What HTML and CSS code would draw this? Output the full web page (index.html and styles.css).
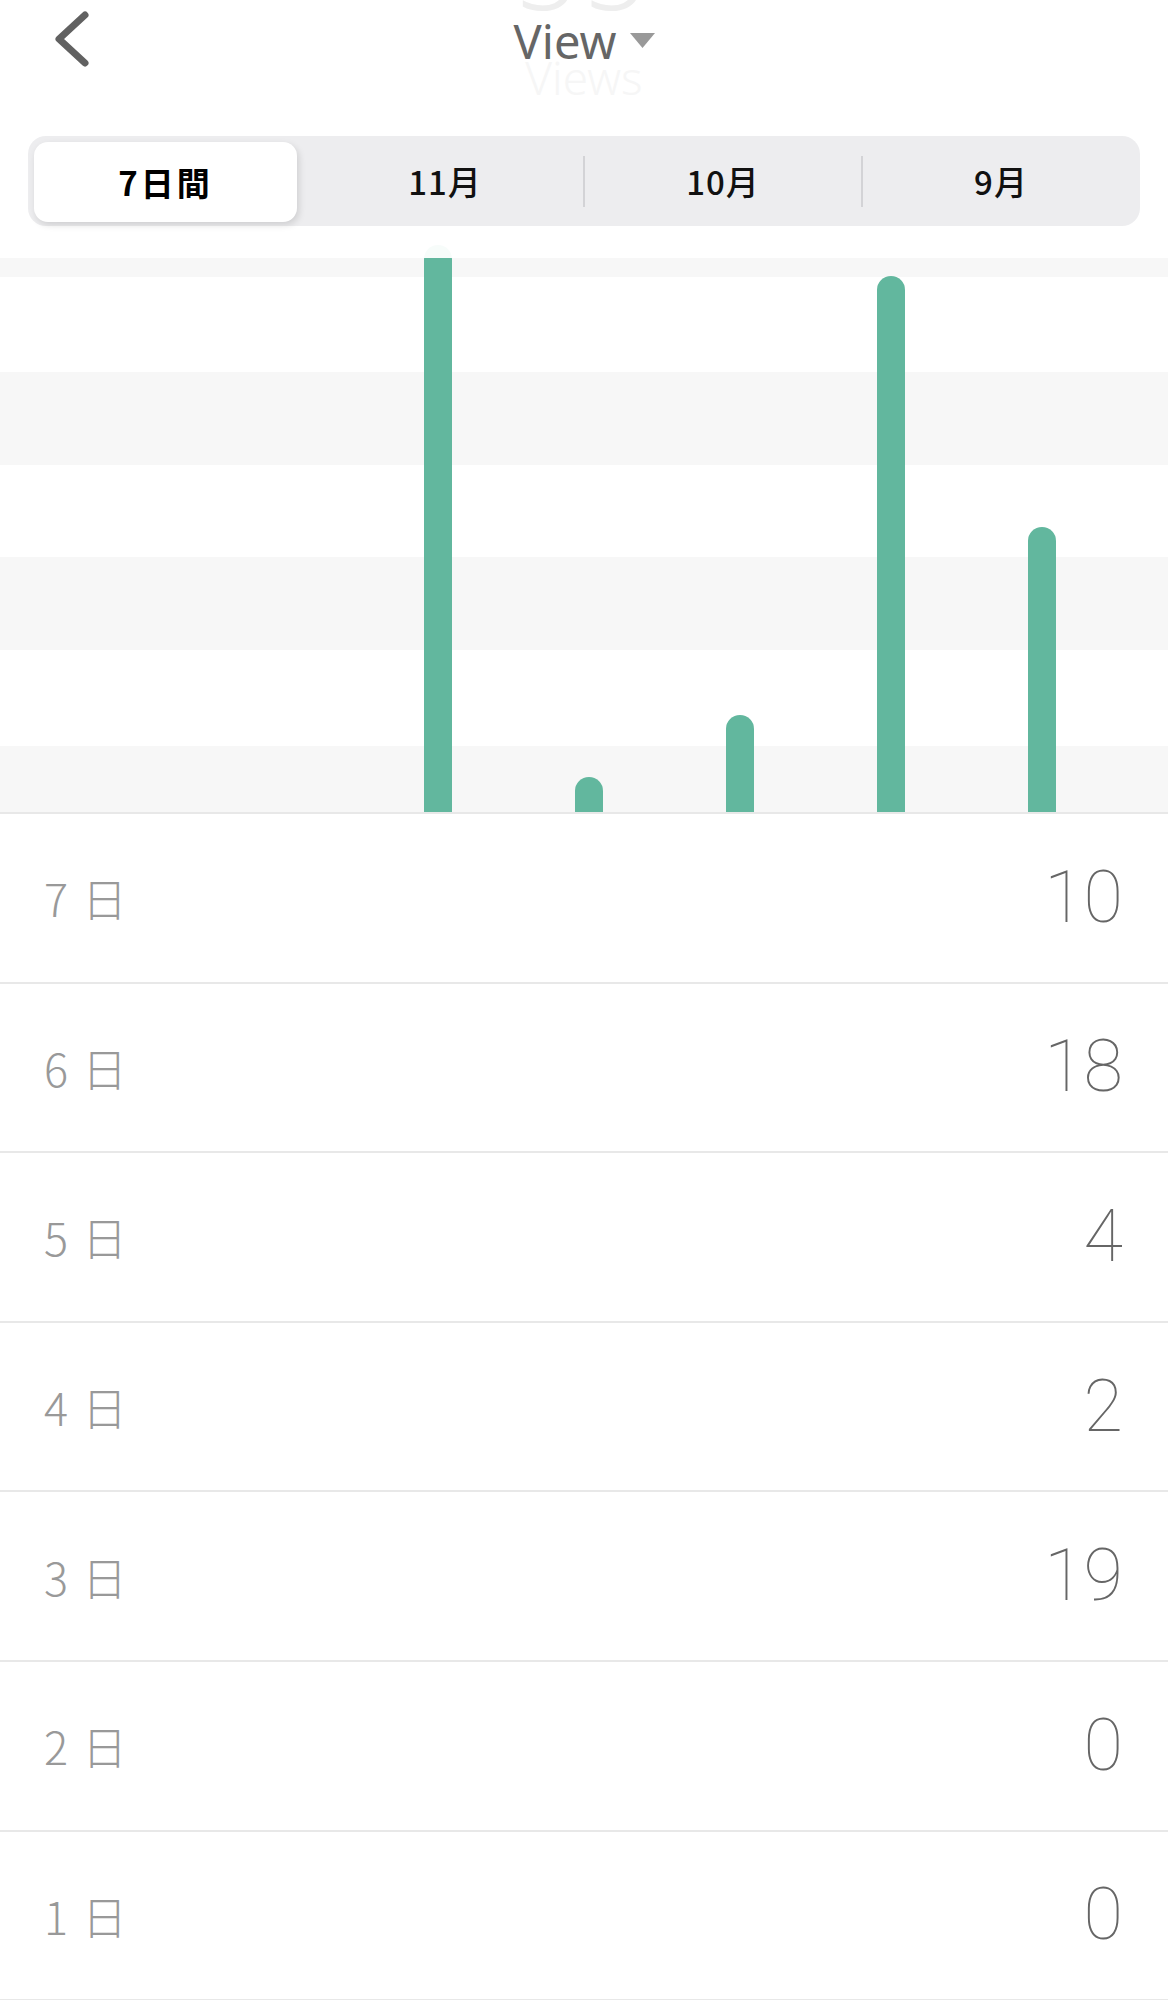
FILE: index.html
```html
<!DOCTYPE html>
<html lang="ja">
<head>
    <meta charset="UTF-8">
    <meta name="viewport" content="width=device-width, initial-scale=1.0">
    <title>View</title>
    <link rel="stylesheet" href="styles.css">
</head>
<body>
    <header class="header">
        <div class="topbar">
            <!-- summary that has scrolled up behind the bar -->
            <span class="ghost-total">55</span>
            <span class="ghost-label">Views</span>

            <a class="back" href="#" aria-label="戻る">
                <svg width="40" height="60" viewBox="0 0 40 60">
                    <polyline points="33,6 7,30 33,54" fill="none" stroke="#616161" stroke-width="7" stroke-linecap="round" stroke-linejoin="round"/>
                </svg>
            </a>
            <div class="title">
                <span>View</span>
                <svg class="caret" width="25" height="15" viewBox="0 0 25 15">
                    <polygon points="0,0 25,0 12.5,15" fill="#999"/>
                </svg>
            </div>
        </div>

        <nav class="segmented">
            <div class="seg active">7日間</div>
            <div class="seg">11月</div>
            <div class="seg divided">10月</div>
            <div class="seg divided">9月</div>
        </nav>
    </header>

    <section class="chart">
        <div class="bars">
            <div class="col"><div class="bar" style="height: 0px"></div></div>
            <div class="col"><div class="bar" style="height: 0px"></div></div>
            <div class="col"><div class="bar" style="height: 567px"></div></div>
            <div class="col"><div class="bar" style="height: 35px"></div></div>
            <div class="col"><div class="bar" style="height: 97px"></div></div>
            <div class="col"><div class="bar" style="height: 536px"></div></div>
            <div class="col"><div class="bar" style="height: 285px"></div></div>
        </div>
    </section>

    <ul class="days">
        <li class="day"><span class="day-label">7 日</span><span class="day-count">10</span></li>
        <li class="day"><span class="day-label">6 日</span><span class="day-count">18</span></li>
        <li class="day"><span class="day-label">5 日</span><span class="day-count">4</span></li>
        <li class="day"><span class="day-label">4 日</span><span class="day-count">2</span></li>
        <li class="day"><span class="day-label">3 日</span><span class="day-count">19</span></li>
        <li class="day"><span class="day-label">2 日</span><span class="day-count">0</span></li>
        <li class="day"><span class="day-label">1 日</span><span class="day-count">0</span></li>
    </ul>
</body>
</html>
```

FILE: styles.css
```css
body {
    margin: 0;
    background: #fff;
    font-family: "Noto Sans", "Noto Sans CJK JP", sans-serif;
    color: #666;
}

/* Header (sits over the chart) */
.header {
    position: relative;
    z-index: 2;
    height: 258px;
    background: rgba(255, 255, 255, 0.95);
}

.topbar {
    position: relative;
    height: 136px;
    display: grid;
    grid-template-columns: 1fr auto 1fr;
    align-items: start;
}

.back {
    display: block;
    width: 40px;
    height: 60px;
    margin: 9px 0 0 52px;
}

.title {
    position: relative;
    display: flex;
    align-items: center;
    gap: 14px;
    margin-top: 18px;
    font-size: 47px;
    line-height: 1;
    color: #666;
    padding-left: 1px;
}

.caret {
    margin-top: -3px;
}

.ghost-total,
.ghost-label {
    position: absolute;
    left: 0;
    right: 0;
    text-align: center;
    font-weight: 300;
    line-height: 1;
    pointer-events: none;
}

.ghost-total {
    top: -88px;
    font-size: 110px;
    letter-spacing: 6px;
    color: #eeeeee;
}

.ghost-label {
    top: 54px;
    font-size: 46px;
    color: #f6f6f6;
}

/* Segmented control */
.segmented {
    display: grid;
    grid-template-columns: repeat(4, 1fr);
    height: 90px;
    margin: 0 28px 0 28px;
    border-radius: 18px;
    background: #ededef;
}

.seg {
    position: relative;
    display: flex;
    align-items: center;
    justify-content: center;
    font-family: "Noto Sans CJK JP", sans-serif;
    font-size: 33px;
    font-weight: 500;
    color: #111;
    letter-spacing: 1px;
}

.seg.active {
    margin: 6px 9px 4px 6px;
    background: #fff;
    border-radius: 14px;
    box-shadow: 2px 3px 7px rgba(0, 0, 0, 0.13);
    font-weight: 700;
    color: #000;
    letter-spacing: 3px;
}

.seg.divided::before {
    content: "";
    position: absolute;
    left: -1px;
    top: 20px;
    width: 2px;
    height: 51px;
    background: #d3d3d6;
}

/* Chart */
.chart {
    height: 554px;
    border-bottom: 2px solid #e8e8e8;
    background: linear-gradient(to bottom,
        #f7f7f7 0, #f7f7f7 19px,
        #fff 19px, #fff 114px,
        #f7f7f7 114px, #f7f7f7 207px,
        #fff 207px, #fff 299px,
        #f7f7f7 299px, #f7f7f7 392px,
        #fff 392px, #fff 488px,
        #f7f7f7 488px, #f7f7f7 554px);
}

.bars {
    display: flex;
    height: 100%;
    padding: 0 51px 0 60px;
}

.col {
    flex: 1;
    display: flex;
    justify-content: center;
    align-items: flex-end;
}

.bar {
    width: 28px;
    flex-shrink: 0;
    background: #62b79e;
    border-radius: 14px 14px 0 0;
}

/* Daily list */
.days {
    list-style: none;
    margin: 0;
    padding: 0;
}

.day {
    display: flex;
    align-items: center;
    justify-content: space-between;
    box-sizing: border-box;
    height: 169.6px;
    padding: 0 45px 0 44px;
    border-bottom: 2px solid #e8e8e8;
}

.day-label {
    font-family: "Noto Sans CJK JP", sans-serif;
    font-size: 45px;
    font-weight: 300;
    color: #999;
    word-spacing: 4px;
}

.day-count {
    font-family: Roboto, sans-serif;
    font-size: 72px;
    font-weight: 100;
    color: #666;
    line-height: 1;
}
```
